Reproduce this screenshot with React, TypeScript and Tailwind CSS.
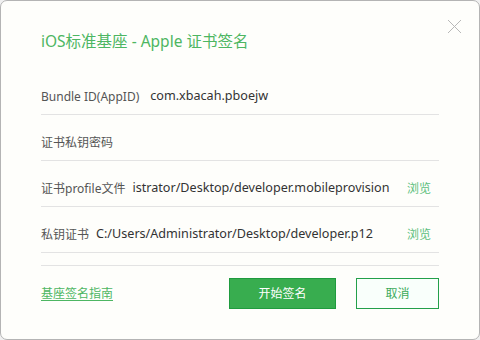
import React from 'react';

const font = { fontFamily: '"Noto Sans", "Noto Sans CJK SC", sans-serif' };

function Row({ label, value, browse, gap = 'ml-[7px]' }: { label: string; value?: string; browse?: boolean; gap?: string }) {
  return (
    <div className="h-[46px] pt-[10px] flex items-center border-b border-[#e3e3e3] text-[12px]">
      <span className="text-[#555] whitespace-nowrap">{label}</span>
      {value && <span className={`${gap} text-[12.6px] text-[#333] whitespace-nowrap`}>{value}</span>}
      {browse && <span className="ml-auto mr-[8px] text-[#5cbf7c]">浏览</span>}
    </div>
  );
}

export default function App() {
  return (
    <div className="w-[480px] h-[340px] bg-[#f0f0f0]" style={font}>
      <div className="relative w-full h-full bg-[#fefefb] border border-[#b4b4b4] rounded-[7px] px-[40px] pt-[29px]">
        {/* Close */}
        <svg className="absolute left-[446px] top-[18px]" width="15" height="15" viewBox="0 0 15 15">
          <path d="M1 1L14 14M14 1L1 14" stroke="#b8b8b8" strokeWidth="1" />
        </svg>

        <div className="h-[24px] flex items-center text-[15.5px] text-[#4db662]">
          iOS标准基座 - Apple 证书签名
        </div>

        <div className="mt-[15px]">
          <Row label="Bundle ID(AppID)" value="com.xbacah.pboejw" gap="ml-[11px]" />
          <Row label="证书私钥密码" />
          <Row label="证书profile文件" value="istrator/Desktop/developer.mobileprovision" browse />
          <Row label="私钥证书" value="C:/Users/Administrator/Desktop/developer.p12" browse />
          <div className="h-[13px] border-b border-[#e3e3e3]" />
        </div>

        <div className="mt-[12px] flex items-center">
          <span className="text-[12px] text-[#4db662] underline underline-offset-2">基座签名指南</span>
          <button className="ml-auto w-[107px] h-[31px] bg-[#38ad4f] border border-[#1f9b3e] text-white text-[12px]">
            开始签名
          </button>
          <button className="ml-[20px] w-[83px] h-[31px] bg-[#f9fffb] border border-[#23a04a] text-[#3daa5a] text-[12px]">
            取消
          </button>
        </div>
      </div>
    </div>
  );
}
